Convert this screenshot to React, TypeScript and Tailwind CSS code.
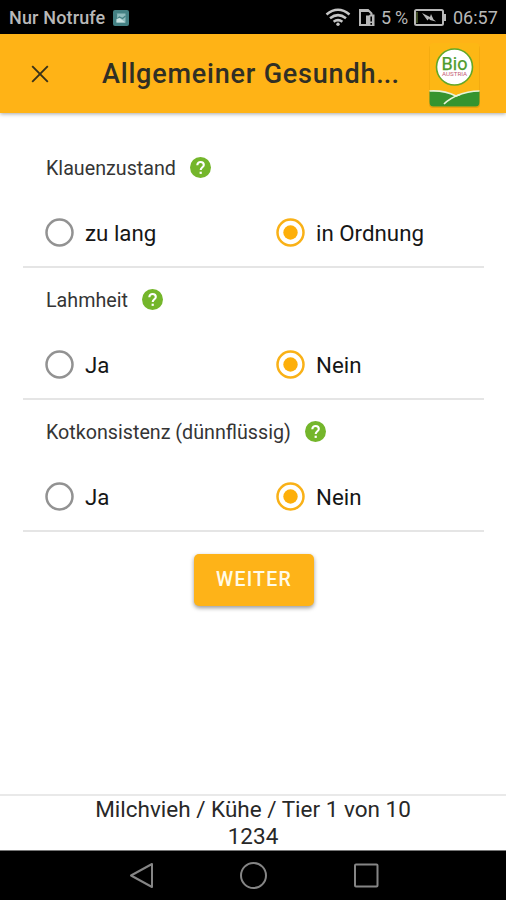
type Question = {
  label: string;
  labelClass: string;
  options: [string, string];
};

const questions: Question[] = [
  { label: "Klauenzustand", labelClass: "w-[144px]", options: ["zu lang", "in Ordnung"] },
  { label: "Lahmheit", labelClass: "w-[96px]", options: ["Ja", "Nein"] },
  { label: "Kotkonsistenz (dünnflüssig)", labelClass: "w-[259px]", options: ["Ja", "Nein"] },
];

function StatusBar() {
  return (
    <div className="flex h-[34px] shrink-0 items-center bg-black pt-[2px] pr-[8px] pl-[9px] text-[18px] text-[#b8b8b8]">
      <span className="-mt-px w-[104px] whitespace-nowrap font-medium tracking-[0.15px]">Nur Notrufe</span>
      <svg className="-mt-[1px] h-4 w-4" viewBox="0 0 16 16">
        <rect width="16" height="16" rx="2" fill="#438083" />
        <path d="M3.500 3.500h9v9h-9z" fill="#8fbcbd" />
        <path d="M3.500 3.500v6l3-2.500 3 1.500 3-2.500" stroke="#438083" strokeWidth="1.300" fill="none" />
        <path d="M3.500 12.500V9l3-1 6 4.500z" fill="#c6e0df" />
      </svg>
      <svg className="-mt-px ml-auto h-[19px] w-[26px]" viewBox="0 0 26 19" fill="none" stroke="#c5c5c5" strokeWidth="2.500">
        <path d="M1.500 6.500Q13-3 24.500 6.500M5 10.300Q13 4 21 10.300M8.600 13.800Q13 10.400 17.400 13.800" />
        <circle cx="13" cy="16.200" r="1.700" fill="#c5c5c5" stroke="none" />
      </svg>
      <svg className="-mt-px ml-[7px] h-[19px] w-[18px]" viewBox="0 0 18 19" fill="none" stroke="#b8b8b8" strokeWidth="2">
        <path d="M8 17H2V2h8l3.500 3.500V7M2 3h9" />
        <path d="M8 7.500h3l1-1h4.500V18H8z" fill="#b8b8b8" stroke="none" />
        <path d="M13.200 8.500v5M13.200 15v1.800" stroke="#000" strokeWidth="1.600" />
      </svg>
      <span className="-mt-px ml-[5px] w-[33px] whitespace-nowrap tracking-[-0.3px]">5 %</span>
      <svg className="-mt-px h-[17px] w-[33px]" viewBox="0 0 33 17" fill="none">
        <rect x="1" y="1" width="28" height="15" rx="1.500" stroke="#b8b8b8" strokeWidth="2" />
        <path d="M30 5h2v7h-2z" fill="#b8b8b8" />
        <path d="M3 3v11" stroke="#536331" strokeWidth="1.500" />
        <path d="M8 4l8 4 1-3 2.500 5.500 2.500 2-6-1.500-1-1.500-1.500 2z" fill="#b8b8b8" />
      </svg>
      <span className="-mt-px ml-[6px] w-[45px] whitespace-nowrap">06:57</span>
    </div>
  );
}

function BioLogo() {
  return (
    <svg className="mt-[3px] h-[67px] w-[54px] shrink-0" viewBox="0 0 54 67" role="img" aria-label="Bio Austria">
      <rect x="1" y="3" width="51" height="63" rx="4" fill="#d88e08" opacity=".55" />
      <rect x="1.500" y="1" width="50" height="63.500" rx="4" fill="#fdb714" />
      <path d="M1.500 49Q16 48 28 54Q40 49 51.500 49V60Q51.500 64.500 47.500 64.500H5.500Q1.500 64.500 1.500 60Z" fill="#36942f" />
      <path d="M1.500 49Q16 48 28 54Q40 49 51.500 49" fill="none" stroke="#e9f4d8" strokeWidth="1.700" />
      <path d="M16 62Q22 56 32 52.500" fill="none" stroke="#e9f4d8" strokeWidth="1.700" />
      <circle cx="26.500" cy="25" r="18" fill="#fff" stroke="#62a828" strokeWidth="1.600" />
      <text textAnchor="middle">
        <tspan x="26.500" y="28" fontSize="18" fill="#4e9b2c" stroke="#4e9b2c" strokeWidth="0.250">Bio</tspan>
        <tspan x="26.500" y="34.200" fontSize="6.200" fill="#c45a72">AUSTRIA</tspan>
      </text>
    </svg>
  );
}

function Header() {
  return (
    <header className="z-10 flex h-[79px] shrink-0 items-center bg-[#ffb316] shadow-[0_1px_4px_rgba(0,0,0,0.35)]">
      <svg className="ml-[31px] h-[18px] w-[18px]" viewBox="0 0 18 18" stroke="#3a3218" strokeWidth="1.900">
        <path d="M1.200 1.200l15.600 15.600M16.800 1.200L1.200 16.800" />
      </svg>
      <h1 className="mt-[2px] ml-[53px] w-[326px] whitespace-nowrap text-[27px] font-medium tracking-[0.8px] text-[#302f25]">
        Allgemeiner Gesundh<span className="tracking-[0.1px]">...</span>
      </h1>
      <BioLogo />
    </header>
  );
}

function HelpIcon() {
  return (
    <svg className="h-[21px] w-[21px]" viewBox="0 0 21 21">
      <circle cx="10.500" cy="10.500" r="10.500" fill="#74b62b" />
      <path d="M7.300 8.300C7.300 3.700 13.800 4.100 13.800 7.900C13.800 10.200 10.700 10.300 10.700 13" fill="none" stroke="#fff" strokeWidth="2.100" />
      <path d="M9.600 14.700h2.200v2.200H9.600z" fill="#fff" />
    </svg>
  );
}

function Option({ label, checked }: { label: string; checked?: boolean }) {
  return (
    <label className="flex items-center gap-[11px] text-[22.3px] leading-7 text-[#161616]">
      <svg className="h-[29px] w-[29px]" viewBox="0 0 29 29">
        <circle cx="14.500" cy="14.500" r="13" fill="none" stroke={checked ? "#f9b117" : "#929292"} strokeWidth="2.500" />
        {checked && <circle cx="14.500" cy="14.500" r="7.200" fill="#fdaf0a" />}
      </svg>
      <span className="whitespace-nowrap">{label}</span>
    </label>
  );
}

export default function App() {
  return (
    <div className="flex h-[900px] w-[506px] flex-col overflow-hidden bg-white font-['Roboto',sans-serif]">
      <StatusBar />
      <Header />
      <main className="flex flex-1 flex-col pt-[23px] pr-[22px] pl-[23px]">
        {questions.map((q) => (
          <section key={q.label} className="flex h-[132px] shrink-0 flex-col border-b-2 border-[#e5e5e5] pl-[23px]">
            <div className="flex h-[63px] items-center text-[19.7px] text-[#353535]">
              <span className={`${q.labelClass} pt-[2px] whitespace-nowrap`}>{q.label}</span>
              <HelpIcon />
            </div>
            <div className="-ml-px grid h-[67px] grid-cols-[231px_1fr] items-center">
              <Option label={q.options[0]} />
              <Option label={q.options[1]} checked />
            </div>
          </section>
        ))}
        <button className="mt-[22px] ml-[171px] h-[52px] w-[120px] rounded-[5px] bg-[#feb318] pb-px text-[19.5px] font-medium tracking-[1.2px] text-[#fffbe8] shadow-[0_2px_4px_rgba(0,0,0,0.4)]">
          WEITER
        </button>
      </main>
      <footer className="h-[56px] shrink-0 border-t-2 border-[#e9e9e9] text-center text-[22.500px] leading-[27px] text-[#282828]">
        <p>Milchvieh / Kühe / Tier 1 von 10</p>
        <p>1234</p>
      </footer>
      <nav className="h-[50px] shrink-0 border-t border-[#777] bg-black">
        <svg className="h-[49px] w-[506px]" viewBox="0 0 506 49" fill="none" stroke="#858585" strokeWidth="2">
          <path d="M152 13V36L131 24.500Z" strokeLinejoin="round" />
          <circle cx="253.500" cy="24.500" r="12.500" />
          <rect x="355" y="13.500" width="22.500" height="22" rx="1" />
        </svg>
      </nav>
    </div>
  );
}
